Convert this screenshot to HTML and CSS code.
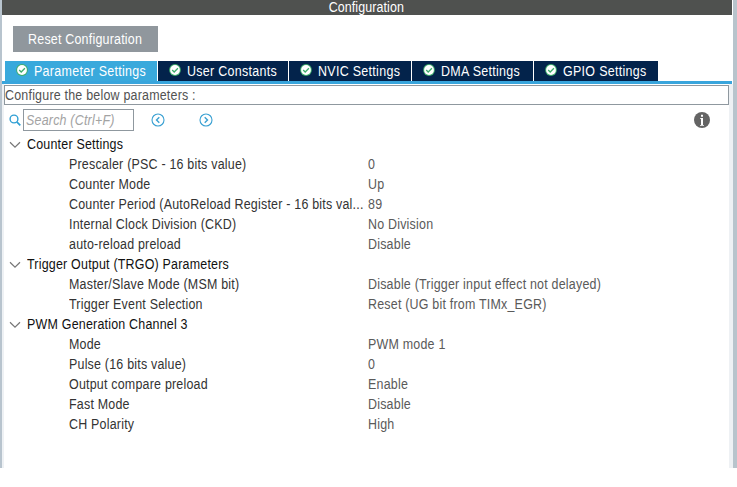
FILE: index.html
```html
<!DOCTYPE html>
<html lang="en">
<head>
<meta charset="utf-8">
<title>Configuration</title>
<link rel="stylesheet" href="styles.css">
</head>
<body>
<svg class="defs" width="0" height="0">
  <symbol id="check" viewBox="0 0 12 12"><circle cx="6" cy="6" r="5.9" fill="#3fae6c"/><circle cx="6" cy="6" r="4.9" fill="#fff"/><path d="M3.2 6l2 2 3.7-3.8" fill="none" stroke="#3fae6c" stroke-width="1.3"/></symbol>
  <symbol id="chevron" viewBox="0 0 12 8"><path d="M1 1.3l5 4.9 5-4.9" fill="none" stroke="#777" stroke-width="1.2"/></symbol>
</svg>
<div class="window">
  <header class="title"><span class="centered">Configuration</span></header>
  <div class="actions"><button class="reset"><span class="centered">Reset Configuration</span></button></div>
  <nav class="tabs">
    <div class="tab active"><svg class="check"><use href="#check"/></svg><span class="text">Parameter Settings</span></div>
    <div class="tab user"><svg class="check"><use href="#check"/></svg><span class="text">User Constants</span></div>
    <div class="tab nvic"><svg class="check"><use href="#check"/></svg><span class="text">NVIC Settings</span></div>
    <div class="tab dma"><svg class="check"><use href="#check"/></svg><span class="text">DMA Settings</span></div>
    <div class="tab gpio"><svg class="check"><use href="#check"/></svg><span class="text">GPIO Settings</span></div>
  </nav>
  <main class="panel">
    <div class="hint"><span class="text">Configure the below parameters :</span></div>
    <div class="toolbar">
      <svg class="search-icon" viewBox="0 0 12 12" fill="none" stroke="#2f9fd4"><circle cx="5" cy="5" r="3.9" stroke-width="1.4"/><path d="M7.8 7.8l3.5 3.5" stroke-width="1.7"/></svg>
      <div class="search"><span class="text">Search (Ctrl+F)</span></div>
      <svg class="arrow prev" viewBox="0 0 14 14" fill="none" stroke="#39a0d2"><circle cx="7" cy="7" r="6" stroke-width="1.1"/><path d="M8.3 4.2L5.5 7l2.8 2.8" stroke-width="1.4"/></svg>
      <svg class="arrow next" viewBox="0 0 14 14" fill="none" stroke="#39a0d2"><circle cx="7" cy="7" r="6" stroke-width="1.1"/><path d="M5.7 4.2L8.5 7 5.7 9.8" stroke-width="1.4"/></svg>
      <svg class="info" viewBox="0 0 16 16"><circle cx="8" cy="8" r="8" fill="#646464"/><path d="M7 2.8h2v2H7zM6 6h3v7h1v.8H6V13h1V6.8H6z" fill="#fff"/></svg>
    </div>
    <section class="group">
      <h2><svg class="chevron"><use href="#chevron"/></svg><span class="text">Counter Settings</span></h2>
      <dl>
        <dt>Prescaler (PSC - 16 bits value)</dt><dd>0</dd>
        <dt>Counter Mode</dt><dd>Up</dd>
        <dt>Counter Period (AutoReload Register - 16 bits val...</dt><dd>89</dd>
        <dt>Internal Clock Division (CKD)</dt><dd>No Division</dd>
        <dt>auto-reload preload</dt><dd>Disable</dd>
      </dl>
    </section>
    <section class="group">
      <h2><svg class="chevron"><use href="#chevron"/></svg><span class="text">Trigger Output (TRGO) Parameters</span></h2>
      <dl>
        <dt>Master/Slave Mode (MSM bit)</dt><dd>Disable (Trigger input effect not delayed)</dd>
        <dt>Trigger Event Selection</dt><dd>Reset (UG bit from TIMx_EGR)</dd>
      </dl>
    </section>
    <section class="group">
      <h2><svg class="chevron"><use href="#chevron"/></svg><span class="text">PWM Generation Channel 3</span></h2>
      <dl>
        <dt>Mode</dt><dd>PWM mode 1</dd>
        <dt>Pulse (16 bits value)</dt><dd>0</dd>
        <dt>Output compare preload</dt><dd>Enable</dd>
        <dt>Fast Mode</dt><dd>Disable</dd>
        <dt>CH Polarity</dt><dd>High</dd>
      </dl>
    </section>
  </main>
</div>
</body>
</html>
```

FILE: styles.css
```css
* { box-sizing: border-box; }
body { margin: 0; background: #fff; overflow: hidden; font: 14px/18px "Liberation Sans", Arial, sans-serif; letter-spacing: .23px; white-space: nowrap; }
svg { display: block; flex: none; }
.defs { position: absolute; }
/* Slightly condensed text */
.text, .centered, dt, dd { display: inline-block; transform: scaleX(.89); transform-origin: left center; }
.centered { transform-origin: center; }
.window { height: 468px; border-left: 2px solid #b8c4ce; border-right: 4px solid #b8c4cc; display: flex; flex-direction: column; }
.title { height: 15px; margin-right: 1px; background: #4f514f; color: #fff; line-height: 14px; text-align: center; }
.title .centered { margin-right: 2px; letter-spacing: .1px; }
.actions { height: 46px; padding: 11px 0 0 11px; }
.reset { display: block; width: 145px; height: 26px; padding: 0; border: 0; background: #90979d; color: #fff; font: inherit; letter-spacing: inherit; }
.tabs { display: flex; gap: 1px; height: 23px; margin-right: 1px; padding-left: 3px; border-bottom: 3px solid #39a5dc; }
.tab { display: flex; align-items: flex-start; height: 20px; padding-left: 11px; background: #03234b; color: #fff; line-height: 20px; letter-spacing: .34px; }
.tab.active { width: 152px; background: #39a9dc; }
.tab.user { width: 130px; }
.tab.nvic { width: 122px; }
.tab.dma { width: 121px; }
.tab.gpio { width: 124px; }
.check { width: 12px; height: 12px; margin: 3px 6px 0 0; }
.panel { flex: 1; padding-top: 1px; border-left: 2px solid #eef1f4; border-right: 4px solid #eef1f4; }
.hint { height: 20px; border: 1px solid #8f989f; color: #525252; line-height: 19px; }
.toolbar { display: flex; align-items: center; height: 30px; padding-left: 5px; }
.search-icon { width: 12px; height: 12px; }
.search { width: 111px; height: 22px; margin-left: 2px; padding-left: 2px; border: 1px solid #8f989f; color: #a3a3a3; font-style: italic; line-height: 20px; }
.arrow { width: 14px; height: 14px; }
.prev { margin-left: 17px; }
.next { margin-left: 34px; }
.info { width: 16px; height: 16px; margin-left: auto; margin-right: 19px; }
h2 { display: flex; align-items: flex-start; height: 20px; margin: 0; padding-left: 5px; color: #111; font: inherit; }
.chevron { width: 12px; height: 8px; margin: 6px 6px 0 0; }
dl { display: grid; grid-template-columns: 299px 1fr; grid-auto-rows: 20px; justify-items: start; margin: 0 0 0 65px; }
dt { color: #333; }
dd { margin: 0; color: #5a5a5a; }
```
